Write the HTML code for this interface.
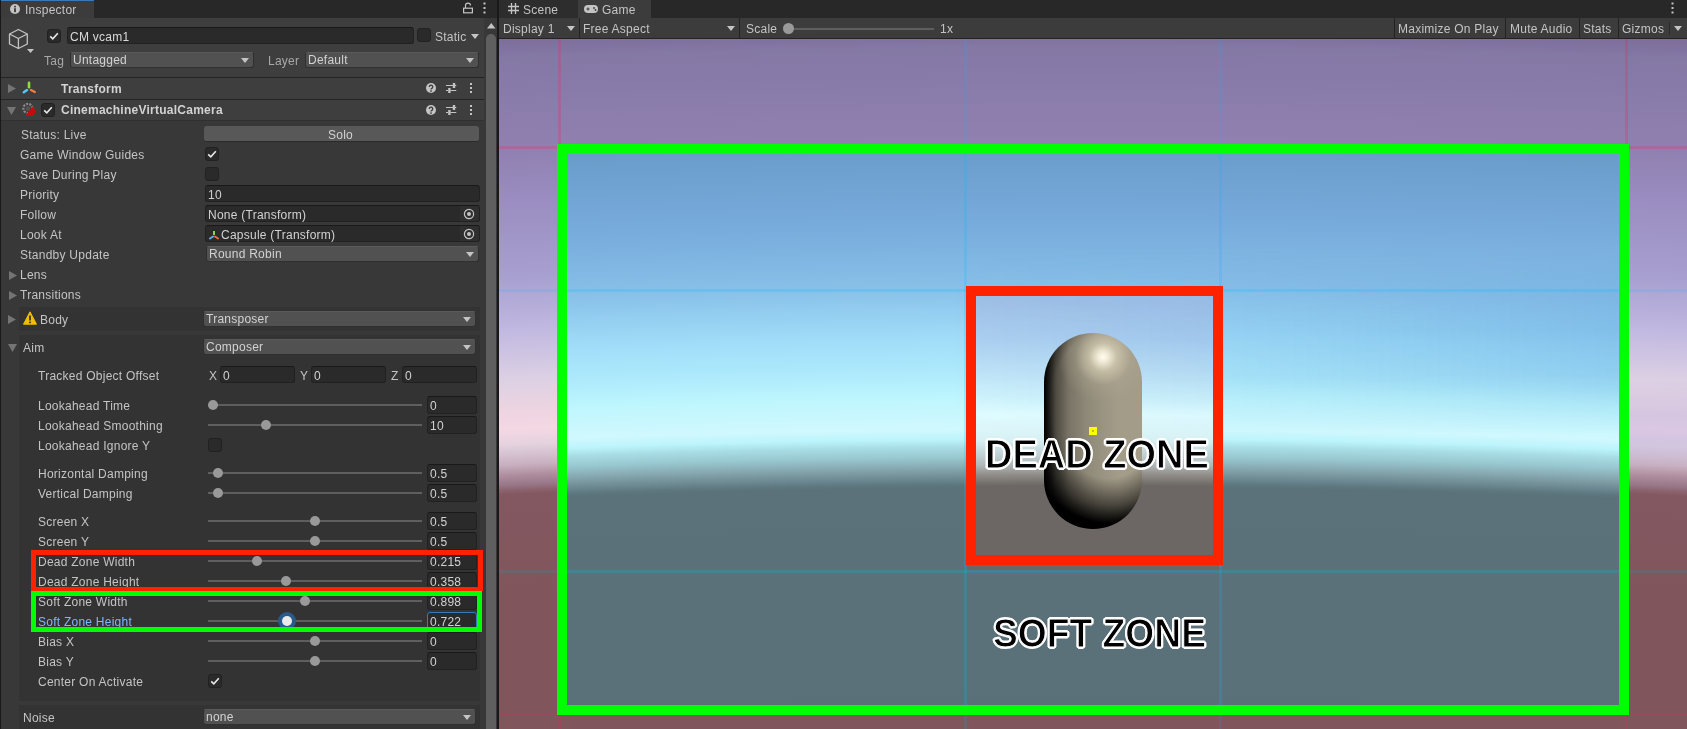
<!DOCTYPE html><html><head><meta charset="utf-8"><style>
*{margin:0;padding:0;box-sizing:border-box}
html,body{width:1687px;height:729px;overflow:hidden;background:#191919;font-family:"Liberation Sans",sans-serif;font-size:12px;color:#c4c4c4}
.a{position:absolute}
.t{position:absolute;white-space:nowrap;letter-spacing:0.25px}
.cb{position:absolute;width:14px;height:14px;background:#2a2a2a;border:1px solid #212121;border-radius:3px}
.fld{position:absolute;background:#2a2a2a;border:1px solid #212121;border-top-color:#191919;border-radius:3px}
.dd{position:absolute;background:#515151;border:1px solid #303030;border-top-color:#5a5a5a;border-radius:3px}
</style></head><body><div id="left" class="a" style="left:0;top:0;width:497px;height:729px;background:#383838;overflow:hidden;will-change:transform">
<div class="a" style="left:0px;top:0px;width:497px;height:18px;background:#282828;"></div>
<div class="a" style="left:1px;top:0px;width:93px;height:18px;background:#3c3c3c;"></div>
<div class="a" style="left:1px;top:0px;width:93px;height:1px;background:#3a79bb;"></div>
<svg class="a" style="left:10px;top:4px" width="10" height="10"><circle cx="5" cy="5" r="5" fill="#c4c4c4"/><rect x="4.2" y="4.2" width="1.6" height="4" fill="#282828"/><rect x="4.2" y="1.8" width="1.6" height="1.6" fill="#282828"/></svg>
<div class="t" style="left:25px;top:3px;font-size:12px;line-height:14px;color:#c4c4c4;font-weight:normal;">Inspector</div>
<svg class="a" style="left:462px;top:2px" width="12" height="12"><path d="M3.5 6V3.6A2.5 2.5 0 0 1 8.5 3.6" stroke="#c4c4c4" stroke-width="1.2" fill="none"/><rect x="1.6" y="6.2" width="8.8" height="4.6" stroke="#c4c4c4" stroke-width="1.2" fill="none"/></svg>
<svg class="a" style="left:483px;top:2px" width="4" height="12"><rect x="0.5" y="0.5" width="2" height="2" fill="#c4c4c4"/><rect x="0.5" y="5" width="2" height="2" fill="#c4c4c4"/><rect x="0.5" y="9.5" width="2" height="2" fill="#c4c4c4"/></svg>
<div class="a" style="left:1px;top:18px;width:483px;height:59px;background:#3e3e3e;"></div>
<svg class="a" style="left:7px;top:28px" width="23" height="23"><path d="M11.4 1.5L20.3 6V16L11.4 20.5L2.5 16V6Z M2.5 6L11.4 10.5L20.3 6 M11.4 10.5V20.5" stroke="#c4c4c4" stroke-width="1.3" fill="none" stroke-linejoin="round"/></svg>
<svg class="a" style="left:27px;top:49px" width="7" height="4"><path d="M0 0H7L3.5 4Z" fill="#c4c4c4"/></svg>
<div class="cb" style="left:47px;top:29px"></div>
<svg class="a" style="left:47px;top:29px" width="14" height="14"><path d="M3.2 7.3L5.8 9.8L10.8 4.2" stroke="#e8e8e8" stroke-width="1.6" fill="none"/></svg>
<div class="fld" style="left:67px;top:27px;width:347px;height:17px"></div>
<div class="t" style="left:70px;top:30px;font-size:12px;line-height:14px;color:#dadada;font-weight:normal;">CM vcam1</div>
<div class="cb" style="left:417px;top:28px"></div>
<div class="t" style="left:435px;top:30px;font-size:12px;line-height:14px;color:#c4c4c4;font-weight:normal;">Static</div>
<svg class="a" style="left:471px;top:34px" width="8" height="5"><path d="M0 0H8L4.0 5Z" fill="#c4c4c4"/></svg>
<div class="t" style="left:44px;top:54px;font-size:12px;line-height:14px;color:#a8a8a8;font-weight:normal;">Tag</div>
<div class="dd" style="left:70px;top:52px;width:184px;height:16px"></div>
<div class="t" style="left:73px;top:53px;font-size:12px;line-height:14px;color:#d2d2d2;font-weight:normal;">Untagged</div>
<svg class="a" style="left:241px;top:58px" width="8" height="5"><path d="M0 0H8L4.0 5Z" fill="#c4c4c4"/></svg>
<div class="t" style="left:268px;top:54px;font-size:12px;line-height:14px;color:#a8a8a8;font-weight:normal;">Layer</div>
<div class="dd" style="left:305px;top:52px;width:174px;height:16px"></div>
<div class="t" style="left:308px;top:53px;font-size:12px;line-height:14px;color:#d2d2d2;font-weight:normal;">Default</div>
<svg class="a" style="left:466px;top:58px" width="8" height="5"><path d="M0 0H8L4.0 5Z" fill="#c4c4c4"/></svg>
<div class="a" style="left:1px;top:77px;width:483px;height:1px;background:#242424;"></div>
<div class="a" style="left:1px;top:78px;width:483px;height:21px;background:#3e3e3e;"></div>
<svg class="a" style="left:8px;top:84px" width="8" height="9"><path d="M0 0L8 4.5L0 9Z" fill="#747474"/></svg>
<svg class="a" style="left:22px;top:81px" width="15" height="13"><path d="M7 1.8V6.2" stroke="#8fdc3c" stroke-width="2.6" stroke-linecap="round"/><path d="M1.8 11.2L5 9" stroke="#56c8f5" stroke-width="2.4" stroke-linecap="round"/><path d="M9 9L12.8 11" stroke="#f27a3a" stroke-width="2.4" stroke-linecap="round"/></svg>
<div class="t" style="left:61px;top:82px;font-size:12px;line-height:14px;color:#d2d2d2;font-weight:bold;">Transform</div>
<div class="a" style="left:1px;top:99px;width:483px;height:1px;background:#242424;"></div>
<div class="a" style="left:1px;top:100px;width:483px;height:20px;background:#3e3e3e;"></div>
<svg class="a" style="left:7px;top:107px" width="9" height="8"><path d="M0 0H9L4.5 8Z" fill="#747474"/></svg>
<svg class="a" style="left:21px;top:102px" width="16" height="16"><circle cx="7" cy="6.5" r="4.6" fill="none" stroke="#8a8a8a" stroke-width="2.2" stroke-dasharray="2 1.2"/><circle cx="7" cy="6.5" r="2.2" fill="#555"/><path d="M4 14L12.5 3.5V14Z" fill="#c80a0a"/><rect x="12" y="7" width="2.5" height="4.5" fill="#c80a0a"/></svg>
<div class="cb" style="left:41px;top:103px"></div>
<svg class="a" style="left:41px;top:103px" width="14" height="14"><path d="M3.2 7.3L5.8 9.8L10.8 4.2" stroke="#e8e8e8" stroke-width="1.6" fill="none"/></svg>
<div class="t" style="left:61px;top:103px;font-size:12px;line-height:14px;color:#d2d2d2;font-weight:bold;">CinemachineVirtualCamera</div>
<svg class="a" style="left:426px;top:83px" width="10" height="10"><circle cx="5" cy="5" r="5" fill="#c4c4c4"/><path d="M3.3 3.9A1.7 1.7 0 1 1 5.9 5.3Q5 5.8 5 6.6" stroke="#3e3e3e" stroke-width="1.4" fill="none"/><rect x="4.2" y="7.4" width="1.6" height="1.4" fill="#3e3e3e"/></svg>
<svg class="a" style="left:446px;top:83px" width="11" height="10"><path d="M0 2.5H7M9 2.5H10.3M0 7.5H2M4.5 7.5H10.3" stroke="#c4c4c4" stroke-width="1.2"/><rect x="6.8" y="0" width="2.4" height="5" fill="#c4c4c4"/><rect x="2.2" y="5" width="2.4" height="5" fill="#c4c4c4"/></svg>
<svg class="a" style="left:470px;top:83px" width="3" height="10"><rect x="0" y="0" width="2" height="2" fill="#c4c4c4"/><rect x="0" y="4" width="2" height="2" fill="#c4c4c4"/><rect x="0" y="8" width="2" height="2" fill="#c4c4c4"/></svg>
<svg class="a" style="left:426px;top:105px" width="10" height="10"><circle cx="5" cy="5" r="5" fill="#c4c4c4"/><path d="M3.3 3.9A1.7 1.7 0 1 1 5.9 5.3Q5 5.8 5 6.6" stroke="#3e3e3e" stroke-width="1.4" fill="none"/><rect x="4.2" y="7.4" width="1.6" height="1.4" fill="#3e3e3e"/></svg>
<svg class="a" style="left:446px;top:105px" width="11" height="10"><path d="M0 2.5H7M9 2.5H10.3M0 7.5H2M4.5 7.5H10.3" stroke="#c4c4c4" stroke-width="1.2"/><rect x="6.8" y="0" width="2.4" height="5" fill="#c4c4c4"/><rect x="2.2" y="5" width="2.4" height="5" fill="#c4c4c4"/></svg>
<svg class="a" style="left:470px;top:105px" width="3" height="10"><rect x="0" y="0" width="2" height="2" fill="#c4c4c4"/><rect x="0" y="4" width="2" height="2" fill="#c4c4c4"/><rect x="0" y="8" width="2" height="2" fill="#c4c4c4"/></svg>
<div class="a" style="left:1px;top:120px;width:483px;height:1px;background:#303030;"></div>
<div class="t" style="left:21px;top:128px;font-size:12px;line-height:14px;color:#c4c4c4;font-weight:normal;">Status: Live</div>
<div class="a" style="left:204px;top:126px;width:275px;height:16px;background:#585858;border-radius:3px;border-bottom:1px solid #2a2a2a"></div>
<div class="t" style="left:328px;top:128px;font-size:12px;line-height:14px;color:#d2d2d2;font-weight:normal;">Solo</div>
<div class="t" style="left:20px;top:148px;font-size:12px;line-height:14px;color:#c4c4c4;font-weight:normal;">Game Window Guides</div>
<div class="cb" style="left:205px;top:147px"></div>
<svg class="a" style="left:205px;top:147px" width="14" height="14"><path d="M3.2 7.3L5.8 9.8L10.8 4.2" stroke="#e8e8e8" stroke-width="1.6" fill="none"/></svg>
<div class="t" style="left:20px;top:168px;font-size:12px;line-height:14px;color:#c4c4c4;font-weight:normal;">Save During Play</div>
<div class="cb" style="left:205px;top:167px"></div>
<div class="t" style="left:20px;top:188px;font-size:12px;line-height:14px;color:#c4c4c4;font-weight:normal;">Priority</div>
<div class="fld" style="left:205px;top:185px;width:275px;height:17px"></div>
<div class="t" style="left:208px;top:188px;font-size:12px;line-height:14px;color:#d2d2d2;font-weight:normal;">10</div>
<div class="t" style="left:20px;top:208px;font-size:12px;line-height:14px;color:#c4c4c4;font-weight:normal;">Follow</div>
<div class="fld" style="left:205px;top:205px;width:275px;height:17px"></div>
<div class="t" style="left:208px;top:208px;font-size:12px;line-height:14px;color:#d2d2d2;font-weight:normal;">None (Transform)</div>
<div class="a" style="left:460px;top:206px;width:19px;height:15px;background:#2f2f2f;border-radius:0 2px 2px 0"></div>
<svg class="a" style="left:463px;top:208px" width="12" height="12"><circle cx="6" cy="6" r="4.6" stroke="#c4c4c4" stroke-width="1.2" fill="none"/><circle cx="6" cy="6" r="2" fill="#c4c4c4"/></svg>
<div class="t" style="left:20px;top:228px;font-size:12px;line-height:14px;color:#c4c4c4;font-weight:normal;">Look At</div>
<div class="fld" style="left:205px;top:225px;width:275px;height:17px"></div>
<svg class="a" style="left:209px;top:230px" width="11" height="10"><path d="M5 1V5" stroke="#8bd24a" stroke-width="2"/><path d="M4 6.5L1 8.5" stroke="#4fb7ef" stroke-width="2" stroke-linecap="round"/><path d="M6 6.5L9 8.5" stroke="#ef6b3c" stroke-width="2" stroke-linecap="round"/></svg>
<div class="t" style="left:221px;top:228px;font-size:12px;line-height:14px;color:#d2d2d2;font-weight:normal;">Capsule (Transform)</div>
<div class="a" style="left:460px;top:226px;width:19px;height:15px;background:#2f2f2f;border-radius:0 2px 2px 0"></div>
<svg class="a" style="left:463px;top:228px" width="12" height="12"><circle cx="6" cy="6" r="4.6" stroke="#c4c4c4" stroke-width="1.2" fill="none"/><circle cx="6" cy="6" r="2" fill="#c4c4c4"/></svg>
<div class="t" style="left:20px;top:248px;font-size:12px;line-height:14px;color:#c4c4c4;font-weight:normal;">Standby Update</div>
<div class="dd" style="left:206px;top:246px;width:273px;height:16px"></div>
<div class="t" style="left:209px;top:247px;font-size:12px;line-height:14px;color:#d2d2d2;font-weight:normal;">Round Robin</div>
<svg class="a" style="left:466px;top:252px" width="8" height="5"><path d="M0 0H8L4.0 5Z" fill="#c4c4c4"/></svg>
<svg class="a" style="left:9px;top:271px" width="8" height="9"><path d="M0 0L8 4.5L0 9Z" fill="#747474"/></svg>
<div class="t" style="left:20px;top:268px;font-size:12px;line-height:14px;color:#c4c4c4;font-weight:normal;">Lens</div>
<svg class="a" style="left:9px;top:291px" width="8" height="9"><path d="M0 0L8 4.5L0 9Z" fill="#747474"/></svg>
<div class="t" style="left:20px;top:288px;font-size:12px;line-height:14px;color:#c4c4c4;font-weight:normal;">Transitions</div>
<div class="a" style="left:19px;top:307px;width:461px;height:24px;background:#333333;"></div>
<svg class="a" style="left:8px;top:315px" width="8" height="9"><path d="M0 0L8 4.5L0 9Z" fill="#747474"/></svg>
<svg class="a" style="left:23px;top:311px" width="14" height="14"><path d="M7 0.8L13.5 13.2H0.5Z" fill="#f4bc02" stroke="#f4bc02" stroke-width="1" stroke-linejoin="round"/><rect x="6.2" y="4.5" width="1.6" height="5" fill="#222"/><rect x="6.2" y="10.6" width="1.6" height="1.6" fill="#222"/></svg>
<div class="t" style="left:40px;top:313px;font-size:12px;line-height:14px;color:#c4c4c4;font-weight:normal;">Body</div>
<div class="dd" style="left:203px;top:311px;width:273px;height:16px"></div>
<div class="t" style="left:206px;top:312px;font-size:12px;line-height:14px;color:#d2d2d2;font-weight:normal;">Transposer</div>
<svg class="a" style="left:463px;top:317px" width="8" height="5"><path d="M0 0H8L4.0 5Z" fill="#c4c4c4"/></svg>
<div class="a" style="left:19px;top:335px;width:461px;height:366px;background:#333333;"></div>
<svg class="a" style="left:8px;top:344px" width="9" height="8"><path d="M0 0H9L4.5 8Z" fill="#747474"/></svg>
<div class="t" style="left:23px;top:341px;font-size:12px;line-height:14px;color:#c4c4c4;font-weight:normal;">Aim</div>
<div class="dd" style="left:203px;top:339px;width:273px;height:16px"></div>
<div class="t" style="left:206px;top:340px;font-size:12px;line-height:14px;color:#d2d2d2;font-weight:normal;">Composer</div>
<svg class="a" style="left:463px;top:345px" width="8" height="5"><path d="M0 0H8L4.0 5Z" fill="#c4c4c4"/></svg>
<div class="t" style="left:38px;top:369px;font-size:12px;line-height:14px;color:#c4c4c4;font-weight:normal;">Tracked Object Offset</div>
<div class="t" style="left:209px;top:369px;font-size:12px;line-height:14px;color:#c4c4c4;font-weight:normal;">X</div>
<div class="fld" style="left:220px;top:366px;width:75px;height:17px"></div>
<div class="t" style="left:223px;top:369px;font-size:12px;line-height:14px;color:#d2d2d2;font-weight:normal;">0</div>
<div class="t" style="left:300px;top:369px;font-size:12px;line-height:14px;color:#c4c4c4;font-weight:normal;">Y</div>
<div class="fld" style="left:311px;top:366px;width:75px;height:17px"></div>
<div class="t" style="left:314px;top:369px;font-size:12px;line-height:14px;color:#d2d2d2;font-weight:normal;">0</div>
<div class="t" style="left:391px;top:369px;font-size:12px;line-height:14px;color:#c4c4c4;font-weight:normal;">Z</div>
<div class="fld" style="left:402px;top:366px;width:75px;height:17px"></div>
<div class="t" style="left:405px;top:369px;font-size:12px;line-height:14px;color:#d2d2d2;font-weight:normal;">0</div>
<div class="t" style="left:38px;top:399px;font-size:12px;line-height:14px;color:#c4c4c4;font-weight:normal;">Lookahead Time</div>
<div class="a" style="left:208px;top:404px;width:214px;height:2px;background:#5e5e5e;"></div>
<div class="a" style="left:208px;top:400px;width:10px;height:10px;border-radius:50%;background:#999"></div>
<div class="fld" style="left:427px;top:396px;width:50px;height:18px"></div>
<div class="t" style="left:430px;top:399px;font-size:12px;line-height:14px;color:#d2d2d2;font-weight:normal;">0</div>
<div class="t" style="left:38px;top:419px;font-size:12px;line-height:14px;color:#c4c4c4;font-weight:normal;">Lookahead Smoothing</div>
<div class="a" style="left:208px;top:424px;width:214px;height:2px;background:#5e5e5e;"></div>
<div class="a" style="left:261px;top:420px;width:10px;height:10px;border-radius:50%;background:#999"></div>
<div class="fld" style="left:427px;top:416px;width:50px;height:18px"></div>
<div class="t" style="left:430px;top:419px;font-size:12px;line-height:14px;color:#d2d2d2;font-weight:normal;">10</div>
<div class="t" style="left:38px;top:467px;font-size:12px;line-height:14px;color:#c4c4c4;font-weight:normal;">Horizontal Damping</div>
<div class="a" style="left:208px;top:472px;width:214px;height:2px;background:#5e5e5e;"></div>
<div class="a" style="left:213px;top:468px;width:10px;height:10px;border-radius:50%;background:#999"></div>
<div class="fld" style="left:427px;top:464px;width:50px;height:18px"></div>
<div class="t" style="left:430px;top:467px;font-size:12px;line-height:14px;color:#d2d2d2;font-weight:normal;">0.5</div>
<div class="t" style="left:38px;top:487px;font-size:12px;line-height:14px;color:#c4c4c4;font-weight:normal;">Vertical Damping</div>
<div class="a" style="left:208px;top:492px;width:214px;height:2px;background:#5e5e5e;"></div>
<div class="a" style="left:213px;top:488px;width:10px;height:10px;border-radius:50%;background:#999"></div>
<div class="fld" style="left:427px;top:484px;width:50px;height:18px"></div>
<div class="t" style="left:430px;top:487px;font-size:12px;line-height:14px;color:#d2d2d2;font-weight:normal;">0.5</div>
<div class="t" style="left:38px;top:515px;font-size:12px;line-height:14px;color:#c4c4c4;font-weight:normal;">Screen X</div>
<div class="a" style="left:208px;top:520px;width:214px;height:2px;background:#5e5e5e;"></div>
<div class="a" style="left:310px;top:516px;width:10px;height:10px;border-radius:50%;background:#999"></div>
<div class="fld" style="left:427px;top:512px;width:50px;height:18px"></div>
<div class="t" style="left:430px;top:515px;font-size:12px;line-height:14px;color:#d2d2d2;font-weight:normal;">0.5</div>
<div class="t" style="left:38px;top:535px;font-size:12px;line-height:14px;color:#c4c4c4;font-weight:normal;">Screen Y</div>
<div class="a" style="left:208px;top:540px;width:214px;height:2px;background:#5e5e5e;"></div>
<div class="a" style="left:310px;top:536px;width:10px;height:10px;border-radius:50%;background:#999"></div>
<div class="fld" style="left:427px;top:532px;width:50px;height:18px"></div>
<div class="t" style="left:430px;top:535px;font-size:12px;line-height:14px;color:#d2d2d2;font-weight:normal;">0.5</div>
<div class="t" style="left:38px;top:555px;font-size:12px;line-height:14px;color:#c4c4c4;font-weight:normal;">Dead Zone Width</div>
<div class="a" style="left:208px;top:560px;width:214px;height:2px;background:#5e5e5e;"></div>
<div class="a" style="left:252px;top:556px;width:10px;height:10px;border-radius:50%;background:#999"></div>
<div class="fld" style="left:427px;top:552px;width:50px;height:18px"></div>
<div class="t" style="left:430px;top:555px;font-size:12px;line-height:14px;color:#d2d2d2;font-weight:normal;">0.215</div>
<div class="t" style="left:38px;top:575px;font-size:12px;line-height:14px;color:#c4c4c4;font-weight:normal;">Dead Zone Height</div>
<div class="a" style="left:208px;top:580px;width:214px;height:2px;background:#5e5e5e;"></div>
<div class="a" style="left:281px;top:576px;width:10px;height:10px;border-radius:50%;background:#999"></div>
<div class="fld" style="left:427px;top:572px;width:50px;height:18px"></div>
<div class="t" style="left:430px;top:575px;font-size:12px;line-height:14px;color:#d2d2d2;font-weight:normal;">0.358</div>
<div class="t" style="left:38px;top:595px;font-size:12px;line-height:14px;color:#c4c4c4;font-weight:normal;">Soft Zone Width</div>
<div class="a" style="left:208px;top:600px;width:214px;height:2px;background:#5e5e5e;"></div>
<div class="a" style="left:300px;top:596px;width:10px;height:10px;border-radius:50%;background:#999"></div>
<div class="fld" style="left:427px;top:592px;width:50px;height:18px"></div>
<div class="t" style="left:430px;top:595px;font-size:12px;line-height:14px;color:#d2d2d2;font-weight:normal;">0.898</div>
<div class="t" style="left:38px;top:615px;font-size:12px;line-height:14px;color:#80b4ff;font-weight:normal;">Soft Zone Height</div>
<div class="a" style="left:208px;top:620px;width:214px;height:2px;background:#5e5e5e;"></div>
<div class="a" style="left:278px;top:612px;width:18px;height:18px;border-radius:50%;background:#285a8c"></div>
<div class="a" style="left:282px;top:616px;width:10px;height:10px;border-radius:50%;background:#eaeaea"></div>
<div class="fld" style="left:427px;top:612px;width:50px;height:18px;border-color:#3a79bb"></div>
<div class="t" style="left:430px;top:615px;font-size:12px;line-height:14px;color:#d2d2d2;font-weight:normal;">0.722</div>
<div class="t" style="left:38px;top:635px;font-size:12px;line-height:14px;color:#c4c4c4;font-weight:normal;">Bias X</div>
<div class="a" style="left:208px;top:640px;width:214px;height:2px;background:#5e5e5e;"></div>
<div class="a" style="left:310px;top:636px;width:10px;height:10px;border-radius:50%;background:#999"></div>
<div class="fld" style="left:427px;top:632px;width:50px;height:18px"></div>
<div class="t" style="left:430px;top:635px;font-size:12px;line-height:14px;color:#d2d2d2;font-weight:normal;">0</div>
<div class="t" style="left:38px;top:655px;font-size:12px;line-height:14px;color:#c4c4c4;font-weight:normal;">Bias Y</div>
<div class="a" style="left:208px;top:660px;width:214px;height:2px;background:#5e5e5e;"></div>
<div class="a" style="left:310px;top:656px;width:10px;height:10px;border-radius:50%;background:#999"></div>
<div class="fld" style="left:427px;top:652px;width:50px;height:18px"></div>
<div class="t" style="left:430px;top:655px;font-size:12px;line-height:14px;color:#d2d2d2;font-weight:normal;">0</div>
<div class="t" style="left:38px;top:439px;font-size:12px;line-height:14px;color:#c4c4c4;font-weight:normal;">Lookahead Ignore Y</div>
<div class="cb" style="left:208px;top:438px"></div>
<div class="t" style="left:38px;top:675px;font-size:12px;line-height:14px;color:#c4c4c4;font-weight:normal;">Center On Activate</div>
<div class="cb" style="left:208px;top:674px"></div>
<svg class="a" style="left:208px;top:674px" width="14" height="14"><path d="M3.2 7.3L5.8 9.8L10.8 4.2" stroke="#e8e8e8" stroke-width="1.6" fill="none"/></svg>
<div class="a" style="left:19px;top:705px;width:461px;height:30px;background:#333333;"></div>
<div class="t" style="left:23px;top:711px;font-size:12px;line-height:14px;color:#c4c4c4;font-weight:normal;">Noise</div>
<div class="dd" style="left:203px;top:709px;width:273px;height:16px"></div>
<div class="t" style="left:206px;top:710px;font-size:12px;line-height:14px;color:#d2d2d2;font-weight:normal;">none</div>
<svg class="a" style="left:463px;top:715px" width="8" height="5"><path d="M0 0H8L4.0 5Z" fill="#c4c4c4"/></svg>
<div class="a" style="left:31px;top:550px;width:452px;height:41px;border:5px solid #ff2200;border-bottom-width:4px"></div>
<div class="a" style="left:31px;top:591px;width:451px;height:41px;border:5px solid #00ff00"></div>
<div class="a" style="left:486px;top:18px;width:11px;height:711px;background:#383838;"></div>
<svg class="a" style="left:487px;top:23px" width="9" height="6"><path d="M0 5.5H8.5L4.25 0Z" fill="#c4c4c4"/></svg>
<div class="a" style="left:486px;top:34px;width:10px;height:700px;background:#5f5f5f;border-radius:5px 5px 0 0"></div>
<div class="a" style="left:0px;top:0px;width:1px;height:729px;background:#191919;"></div>
</div>
<div class="a" style="left:497px;top:0px;width:2px;height:729px;background:#191919;"></div>
<div id="gv" class="a" style="left:499px;top:0;width:1188px;height:729px;background:#282828;overflow:hidden;will-change:transform">
<div class="a" style="left:0px;top:0px;width:79px;height:18px;background:#2d2d2d;"></div>
<svg class="a" style="left:9px;top:3px" width="11" height="11"><path d="M3.5 0V11M7.5 0V11M0 3.5H11M0 7.5H11" stroke="#c4c4c4" stroke-width="1.3"/></svg>
<div class="t" style="left:24px;top:3px;font-size:12px;line-height:14px;color:#c4c4c4;font-weight:normal;">Scene</div>
<div class="a" style="left:79px;top:0px;width:73px;height:19px;background:#3c3c3c;"></div>
<svg class="a" style="left:85px;top:5px" width="14" height="8"><rect x="0" y="0" width="14" height="8" rx="4" fill="#c4c4c4"/><path d="M2.5 4H5.5M4 2.5V5.5" stroke="#3c3c3c" stroke-width="1.1"/><circle cx="10" cy="3" r="0.9" fill="#3c3c3c"/><circle cx="11.5" cy="5" r="0.9" fill="#3c3c3c"/></svg>
<div class="t" style="left:103px;top:3px;font-size:12px;line-height:14px;color:#c4c4c4;font-weight:normal;">Game</div>
<svg class="a" style="left:1172px;top:2px" width="4" height="12"><rect x="0.5" y="0.5" width="2" height="2" fill="#c4c4c4"/><rect x="0.5" y="5" width="2" height="2" fill="#c4c4c4"/><rect x="0.5" y="9.5" width="2" height="2" fill="#c4c4c4"/></svg>
<div class="a" style="left:0px;top:18px;width:1188px;height:21px;background:#3c3c3c;"></div>
<div class="a" style="left:0px;top:38px;width:1188px;height:1px;background:#232323;"></div>
<div class="a" style="left:80px;top:18px;width:1px;height:20px;background:#232323;"></div>
<div class="a" style="left:240px;top:18px;width:1px;height:20px;background:#232323;"></div>
<div class="t" style="left:4px;top:22px;font-size:12px;line-height:14px;color:#c4c4c4;font-weight:normal;">Display 1</div>
<svg class="a" style="left:68px;top:26px" width="8" height="5"><path d="M0 0H8L4.0 5Z" fill="#c4c4c4"/></svg>
<div class="t" style="left:84px;top:22px;font-size:12px;line-height:14px;color:#c4c4c4;font-weight:normal;">Free Aspect</div>
<svg class="a" style="left:228px;top:26px" width="8" height="5"><path d="M0 0H8L4.0 5Z" fill="#c4c4c4"/></svg>
<div class="t" style="left:247px;top:22px;font-size:12px;line-height:14px;color:#c4c4c4;font-weight:normal;">Scale</div>
<div class="a" style="left:290px;top:28px;width:145px;height:2px;background:#5e5e5e;"></div>
<div class="a" style="left:284px;top:23px;width:11px;height:11px;border-radius:50%;background:#999"></div>
<div class="t" style="left:441px;top:22px;font-size:12px;line-height:14px;color:#c4c4c4;font-weight:normal;">1x</div>
<div class="a" style="left:895px;top:18px;width:1px;height:20px;background:#232323;"></div>
<div class="a" style="left:1006px;top:18px;width:1px;height:20px;background:#232323;"></div>
<div class="a" style="left:1080px;top:18px;width:1px;height:20px;background:#232323;"></div>
<div class="a" style="left:1119px;top:18px;width:1px;height:20px;background:#232323;"></div>
<div class="t" style="left:899px;top:22px;font-size:12px;line-height:14px;color:#c4c4c4;font-weight:normal;">Maximize On Play</div>
<div class="t" style="left:1011px;top:22px;font-size:12px;line-height:14px;color:#c4c4c4;font-weight:normal;">Mute Audio</div>
<div class="t" style="left:1084px;top:22px;font-size:12px;line-height:14px;color:#c4c4c4;font-weight:normal;">Stats</div>
<div class="t" style="left:1123px;top:22px;font-size:12px;line-height:14px;color:#c4c4c4;font-weight:normal;">Gizmos</div>
<div class="a" style="left:1170px;top:22px;width:1px;height:13px;background:#2a2a2a;"></div>
<svg class="a" style="left:1175px;top:26px" width="8" height="5"><path d="M0 0H8L4.0 5Z" fill="#c4c4c4"/></svg>
</div>
<div class="a" style="left:499px;top:39px;width:1188px;height:690px;overflow:hidden;background:#80555c">
<div class="a" style="left:0px;top:0px;width:1188px;height:690px;background:radial-gradient(4526.9px 1516.5px at 576.0px 1961.0px,#80555c 82.559%,#80555c 93.109%,#845860 100.066%,#8c6470 100.363%,#987888 100.692%,#b090a0 101.352%,#c8b0c0 102.011%,#dccad8 103.000%,#e4d2de 103.330%,#f4d8e4 104.319%,#ecd4e0 105.638%,#dcd0e4 107.616%,#c0b8e0 110.913%,#a8a0d0 114.210%,#9a8cc0 119.486%,#9080b0 122.783%,#8478a5 128.717%,#7c6c9a 130.102%)"></div>
<div class="a" style="left:62px;top:110px;width:1064px;height:564px;background:radial-gradient(4526.9px 1516.5px at 514.0px 1851.0px,#5a7078 81.965%,#5b727a 99.769%,#5e7880 99.967%,#708c94 100.429%,#88aab2 101.088%,#98c8d0 101.747%,#a8dce4 102.407%,#bcf4fc 102.934%,#d0f8fe 103.594%,#bef6fd 105.704%,#b0ecfc 107.023%,#a0dcf8 109.660%,#88c0e8 112.957%,#78acdc 116.914%,#6a9cca 122.255%)"></div>
<div class="a" style="left:468px;top:253px;width:252px;height:278px;background:radial-gradient(4526.9px 1516.5px at 108.0px 1708.0px,#6c6764 81.780%,#6c6764 99.848%,#74706c 100.046%,#908c88 100.574%,#b0b8b8 101.233%,#c0d0d4 101.893%,#d8f0f4 102.882%,#e0fcff 104.530%,#d0f4fc 105.519%,#c4e8f8 106.838%,#acd0f0 109.476%,#9cbce4 112.641%)"></div>
<div class="a" style="left:62px;top:110px;width:1064px;height:564px;background:linear-gradient(to right,rgba(50,120,200,0) 389px,rgba(50,120,200,0.22) 1064px);-webkit-mask-image:linear-gradient(to bottom,transparent 101px,#000 181px,#000 226px,transparent 286px);mask-image:linear-gradient(to bottom,transparent 101px,#000 181px,#000 226px,transparent 286px)"></div>
<div class="a" style="left:1129px;top:0px;width:59px;height:690px;background:rgba(170,170,225,0.35);-webkit-mask-image:linear-gradient(to bottom,transparent 341px,#000 376px,#000 401px,transparent 431px);mask-image:linear-gradient(to bottom,transparent 341px,#000 376px,#000 401px,transparent 431px)"></div>
<div class="a" style="left:59px;top:0px;width:3px;height:690px;background:rgba(232,40,92,0.25)"></div>
<div class="a" style="left:1126px;top:0px;width:3px;height:690px;background:rgba(232,40,92,0.25)"></div>
<div class="a" style="left:0px;top:107px;width:1188px;height:3px;background:rgba(232,40,92,0.25)"></div>
<div class="a" style="left:0px;top:674px;width:1188px;height:3px;background:rgba(232,40,92,0.25)"></div>
<div class="a" style="left:465px;top:0px;width:3px;height:107px;background:rgba(0,190,255,0.12)"></div>
<div class="a" style="left:465px;top:107px;width:3px;height:570px;background:rgba(0,190,255,0.2)"></div>
<div class="a" style="left:465px;top:677px;width:3px;height:13px;background:rgba(0,190,255,0.12)"></div>
<div class="a" style="left:720px;top:0px;width:3px;height:107px;background:rgba(0,190,255,0.12)"></div>
<div class="a" style="left:720px;top:107px;width:3px;height:570px;background:rgba(0,190,255,0.2)"></div>
<div class="a" style="left:720px;top:677px;width:3px;height:13px;background:rgba(0,190,255,0.12)"></div>
<div class="a" style="left:0px;top:250px;width:59px;height:3px;background:rgba(0,190,255,0.12)"></div>
<div class="a" style="left:59px;top:250px;width:1070px;height:3px;background:rgba(0,190,255,0.2)"></div>
<div class="a" style="left:1129px;top:250px;width:59px;height:3px;background:rgba(0,190,255,0.12)"></div>
<div class="a" style="left:0px;top:531px;width:59px;height:3px;background:rgba(0,190,255,0.12)"></div>
<div class="a" style="left:59px;top:531px;width:1070px;height:3px;background:rgba(0,190,255,0.2)"></div>
<div class="a" style="left:1129px;top:531px;width:59px;height:3px;background:rgba(0,190,255,0.12)"></div>
<div class="a" style="left:545px;top:294px;width:98px;height:196px;border-radius:49px;background:radial-gradient(circle at 59px 24px,rgba(255,253,240,1) 0px,rgba(245,240,220,0.95) 5px,rgba(215,207,180,0.7) 14px,rgba(180,172,150,0.3) 28px,rgba(160,152,132,0) 45px),linear-gradient(to right,rgba(0,0,0,1) 0px,rgba(0,0,0,0.82) 5px,rgba(0,0,0,0.52) 12px,rgba(0,0,0,0.26) 25px,rgba(0,0,0,0.13) 42px,rgba(0,0,0,0.05) 60px,rgba(0,0,0,0) 75px),radial-gradient(ellipse 92px 118px at 64px 72px,rgba(0,0,0,0) 62%,rgba(0,0,0,0.55) 85%,rgba(0,0,0,1) 100%),#a39c89;"></div>
<div class="a" style="left:590px;top:388px;width:8px;height:8px;background:#ffff00;"><div class="a" style="left:3px;top:3px;width:2px;height:2px;background:#c4c400"></div></div>
<div class="a" style="left:58px;top:105px;width:1072px;height:571px;border:10px solid #00ff00"></div>
<div class="a" style="left:467px;top:247px;width:257px;height:279px;border:10px solid #ff2200"></div>
<div class="t" style="left:486px;top:395px;font-size:40.5px;line-height:40px;font-weight:bold;color:#000;letter-spacing:0;-webkit-text-stroke:1px #fff;text-shadow:2px 0px 0 #fff,-2px 0px 0 #fff,0px 2px 0 #fff,0px -2px 0 #fff,1.4px 1.4px 0 #fff,-1.4px 1.4px 0 #fff,1.4px -1.4px 0 #fff,-1.4px -1.4px 0 #fff;transform:scaleX(0.938);transform-origin:0 0">DEAD ZONE</div>
<div class="t" style="left:494px;top:574px;font-size:40.5px;line-height:40px;font-weight:bold;color:#000;letter-spacing:0;-webkit-text-stroke:1px #fff;text-shadow:2px 0px 0 #fff,-2px 0px 0 #fff,0px 2px 0 #fff,0px -2px 0 #fff,1.4px 1.4px 0 #fff,-1.4px 1.4px 0 #fff,1.4px -1.4px 0 #fff,-1.4px -1.4px 0 #fff;transform:scaleX(0.919);transform-origin:0 0">SOFT ZONE</div>
</div></body></html>
